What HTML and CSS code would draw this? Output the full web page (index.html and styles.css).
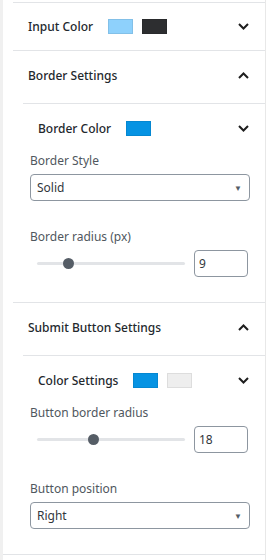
FILE: index.html
```html
<!DOCTYPE html>
<html lang="en">
<head>
    <meta charset="UTF-8">
    <meta name="viewport" content="width=device-width, initial-scale=1.0">
    <title>Form Settings</title>
    <link rel="stylesheet" href="styles.css">
</head>
<body>
    <div class="sidebar">
        <div class="top-rule"></div>

        <!-- Input Color -->
        <div class="panel">
            <div class="panel-head first">
                <span class="panel-title">Input Color</span>
                <span class="swatch" style="background:#8ed1fc"></span>
                <span class="swatch" style="background:#2d2e30"></span>
                <svg class="chevron" width="11" height="7" viewBox="0 0 11 7"><polyline points="1,1 5.5,5.5 10,1"/></svg>
            </div>
        </div>

        <!-- Border Settings -->
        <div class="panel">
            <div class="panel-head">
                <span class="panel-title">Border Settings</span>
                <svg class="chevron" width="11" height="7" viewBox="0 0 11 7"><polyline points="1,6 5.5,1.5 10,6"/></svg>
            </div>
            <div class="subpanel">
                <div class="panel-head sub">
                    <span class="panel-title">Border Color</span>
                    <span class="swatch" style="background:#0693e3"></span>
                    <svg class="chevron" width="11" height="7" viewBox="0 0 11 7"><polyline points="1,1 5.5,5.5 10,1"/></svg>
                </div>
                <div class="fields">
                    <div class="field-label">Border Style</div>
                    <div class="select"><span>Solid</span><span class="arrow">&#9660;</span></div>

                    <div class="field-label spaced">Border radius (px)</div>
                    <div class="range-row">
                        <div class="range">
                            <div class="track"></div>
                            <div class="thumb" style="left:26px"></div>
                        </div>
                        <div class="number">9</div>
                    </div>
                </div>
            </div>
        </div>

        <!-- Submit Button Settings -->
        <div class="panel">
            <div class="panel-head">
                <span class="panel-title">Submit Button Settings</span>
                <svg class="chevron" width="11" height="7" viewBox="0 0 11 7"><polyline points="1,6 5.5,1.5 10,6"/></svg>
            </div>
            <div class="subpanel">
                <div class="panel-head sub">
                    <span class="panel-title">Color Settings</span>
                    <span class="swatch" style="background:#0693e3"></span>
                    <span class="swatch light" style="background:#eeeeee"></span>
                    <svg class="chevron" width="11" height="7" viewBox="0 0 11 7"><polyline points="1,1 5.5,5.5 10,1"/></svg>
                </div>
                <div class="fields">
                    <div class="field-label">Button border radius</div>
                    <div class="range-row">
                        <div class="range">
                            <div class="track"></div>
                            <div class="thumb" style="left:51px"></div>
                        </div>
                        <div class="number">18</div>
                    </div>

                    <div class="field-label spaced">Button position</div>
                    <div class="select"><span>Right</span><span class="arrow">&#9660;</span></div>
                </div>
            </div>
        </div>

        <div class="bottom-rule"></div>
    </div>
</body>
</html>
```

FILE: styles.css
```css
body {
    margin: 0;
    padding: 0;
    background: #ffffff;
    font-family: "Noto Sans", "Open Sans", sans-serif;
    font-size: 12px;
    color: #1e1e1e;
}

.sidebar {
    width: 266px;
    height: 560px;
    box-sizing: border-box;
    border-left: 3px solid #f0f0f0;
    border-right: 1px solid #e8e8e8;
    overflow: hidden;
}

.top-rule {
    margin: 2px 0 0 10px;
    height: 1px;
    background: #e2e4e7;
}

.panel {
    margin-left: 10px;
}

.panel + .panel {
    border-top: 1px solid #e2e4e7;
}

/* Panel headers */
.panel-head {
    display: flex;
    align-items: center;
    height: 48px;
    padding: 0 16px 0 15px;
}

.panel-head.first {
    height: 47px;
}

.panel-title {
    font-weight: 500;
    color: #23282d;
    margin-right: 15px;
}

.chevron {
    margin-left: auto;
    fill: none;
    stroke: #1e1e1e;
    stroke-width: 2;
}

.swatch {
    display: inline-block;
    width: 25px;
    height: 15px;
    box-sizing: border-box;
    border: 1px solid rgba(0, 0, 0, 0.08);
    margin-right: 9px;
}

.swatch.light {
    border-color: #dddddd;
}

/* Nested panel */
.subpanel {
    margin: 4px 0 0 10px;
    border-top: 1px solid #e2e4e7;
}

.fields {
    padding: 0 15px 25px 7px;
}

.field-label {
    line-height: 18px;
    color: #50575e;
    margin-bottom: 4px;
}

.field-label.spaced {
    margin-top: 27px;
}

.select {
    display: flex;
    align-items: center;
    justify-content: space-between;
    height: 27px;
    box-sizing: border-box;
    border: 1px solid #8d96a0;
    border-radius: 4px;
    padding: 0 7px 0 6px;
    color: #32373c;
}

.select .arrow {
    font-size: 8px;
    color: #555d66;
}

/* Range control */
.range-row {
    display: flex;
    align-items: center;
}

.range {
    flex: 1;
    position: relative;
    height: 11px;
    margin: 0 9px 0 7px;
}

.track {
    position: absolute;
    left: 0;
    right: 0;
    top: 4px;
    height: 3px;
    border-radius: 2px;
    background: #e2e4e7;
}

.thumb {
    position: absolute;
    top: 0;
    width: 11px;
    height: 11px;
    border-radius: 50%;
    background: #555d66;
}

.number {
    width: 54px;
    height: 27px;
    box-sizing: border-box;
    border: 1px solid #8d96a0;
    border-radius: 4px;
    margin-right: 2px;
    padding: 0 4px;
    line-height: 25px;
    color: #32373c;
}

.bottom-rule {
    height: 1px;
    background: #e2e4e7;
}
```
